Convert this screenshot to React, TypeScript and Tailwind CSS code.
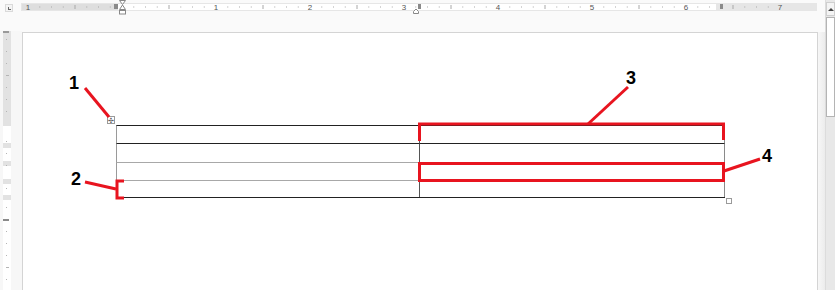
import React from 'react'

const INCH = 94
const ZERO = 101 // ruler-relative x of the left margin

function HRuler() {
  const ticks: React.ReactNode[] = []
  for (let i = -8; i <= 56; i++) {
    const x = ZERO + (i * INCH) / 8
    if (x < 2 || x > 793) continue
    if (i % 8 === 0) continue
    const half = i % 4 === 0
    ticks.push(
      <line key={i} x1={x} x2={x} y1={half ? 5 : 6.5} y2={half ? 9 : 7.5} stroke="#a8a8a8" strokeWidth={1} />
    )
  }
  const nums = [-1, 1, 2, 3, 4, 5, 6, 7]
  return (
    <svg width={800} height={20} className="block">
      <rect x={0.5} y={3.5} width={795} height={7} fill="#ffffff" stroke="#e6e6e6" />
      <rect x={1} y={4} width={96} height={6} fill="#dedede" />
      <rect x={695} y={4} width={100} height={6} fill="#e6e6e6" />
      {ticks}
      {nums.map(n => (
        <text key={n} x={ZERO + n * INCH} y={10} fontSize={8} fill="#555" textAnchor="middle"
          fontFamily="Liberation Sans, Arial, sans-serif">{Math.abs(n)}</text>
      ))}
      {/* left margin block */}
      <rect x={93} y={4} width={4} height={5} fill="#8a8a8a" />
      {/* indent hourglass */}
      <path d="M98.5 0.5 H104.5 L101.5 4.5 Z" fill="#fff" stroke="#888" />
      <path d="M101.5 5 L104.5 9.5 H98.5 Z" fill="#fff" stroke="#888" />
      <rect x={98.5} y={10.5} width={6} height={3.5} fill="#fff" stroke="#888" />
      {/* column marker + hanging indent */}
      <path d="M392.5 11.5 L395 9 L397.5 11.5 V13.5 H392.5 Z" fill="#fff" stroke="#888" />
      <rect x={397} y={4} width={3} height={5} fill="#8a8a8a" />
      <rect x={699} y={4} width={3} height={5} fill="#8a8a8a" />
    </svg>
  )
}

function VRuler() {
  const blocks = [143, 161, 179, 195]
  return (
    <svg width={12} height={260} className="block">
      <rect x={3} y={0} width={8} height={260} fill="#ffffff" />
      <rect x={3} y={0} width={8} height={95} fill="#e2e2e2" />
      <rect x={3} y={0} width={6} height={2} fill="#9a9a9a" />
      {blocks.map(b => (
        <rect key={b} x={3} y={b - 31} width={8} height={5} fill="#e2e2e2" />
      ))}
      {[8, 20, 32, 44, 56, 68, 80, 110, 122, 134, 157, 176, 200, 212, 224, 236, 248].map(y => (
        <line key={y} x1={6} x2={y === 44 || y === 236 ? 9 : 7} y1={y + 0.5} y2={y + 0.5} stroke="#b4b4b4" />
      ))}
      <rect x={3} y={188} width={6} height={2} fill="#8a8a8a" />
    </svg>
  )
}

function Annotations() {
  const red = '#e8141f'
  return (
    <svg width={835} height={290} className="absolute inset-0 pointer-events-none">
      <g stroke={red} strokeWidth={3} fill="none" strokeLinejoin="miter">
        <line x1={85} y1={88} x2={109} y2={117} />
        <line x1={85} y1={182} x2={116} y2={189} />
        <path d="M124 181 H117 V198 H124" />
        <path d="M419.5 141 V124 H723.5 V140" />
        <line x1={588} y1={124} x2={628} y2={87} />
        <rect x={419.5} y={163.5} width={304} height={17} />
        <line x1={724} y1={171} x2={760} y2={159} />
      </g>
      <g fontFamily="Liberation Sans, Arial, sans-serif" fontWeight={700} fontSize={18} fill="#000">
        <text x={69} y={89}>1</text>
        <text x={71} y={185}>2</text>
        <text x={626} y={84}>3</text>
        <text x={762} y={162}>4</text>
      </g>
    </svg>
  )
}

const rows = [
  { h: 'h-[18px]', leftTop: 'border-[#222]', rightTop: 'border-[#222]' },
  { h: 'h-[19px]', leftTop: 'border-[#222]', rightTop: 'border-[#222]' },
  { h: 'h-[18px]', leftTop: 'border-[#a8a8a8]', rightTop: 'border-[#222]' },
  { h: 'h-[17px]', leftTop: 'border-[#a8a8a8]', rightTop: 'border-[#222]' },
]

export default function App() {
  return (
    <div className="relative w-[835px] h-[290px] overflow-hidden bg-[#f4f4f4] flex font-['Liberation_Sans',Arial,sans-serif]">
      <div className="w-[825px] flex flex-col">
        {/* top ruler row */}
        <div className="h-[32px] shrink-0 bg-[#fafafa] flex items-start">
          <div className="ml-[5px] mt-[4px] w-[8px] h-[8px] bg-[#f4f4f4] border border-[#dadada] flex items-end justify-start pl-[2px] pb-[1px]">
            <span className="block w-[3px] h-[3px] border-l border-b border-[#666]" />
          </div>
          <div className="ml-[8px]">
            <HRuler />
          </div>
        </div>

        {/* document area */}
        <div className="flex flex-1 min-h-0">
          <div className="w-[22px] shrink-0 bg-[#f7f7f7] -mt-[1px]">
            <VRuler />
          </div>
          <div className="flex-1 bg-white border-l border-t border-r border-[#d4d4d4]">
            <div className="ml-[93px] mt-[92px] w-[609px] relative">
              {/* move handle */}
              <div className="absolute -left-[9px] -top-[9px] w-[8px] h-[8px] bg-white border border-[#9a9a9a] flex items-center justify-center text-[7px] leading-none text-[#555]">✣</div>
              {rows.map((r, i) => (
                <div key={i} className={`flex ${r.h}`}>
                  <div className={`w-[303px] border-t border-l border-l-[#9a9a9a] ${r.leftTop}`} />
                  <div className={`flex-1 border-t border-l border-r border-l-[#555] border-r-[#8a8a8a] ${r.rightTop}`} />
                </div>
              ))}
              <div className="h-0 border-t border-[#222]" />
              {/* resize handle */}
              <div className="absolute -right-[7px] -bottom-[6px] w-[6px] h-[6px] bg-white border border-[#9a9a9a]" />
            </div>
          </div>
          <div className="w-[7px] shrink-0 bg-gradient-to-r from-[#f7f7f7] to-[#ececec]" />
        </div>
      </div>

      {/* scrollbar */}
      <div className="w-[10px] flex flex-col bg-[#e8e8e8] border-l border-[#dcdcdc]">
        <div className="h-[14px] mt-[2px] flex items-center justify-center bg-[#f4f4f4] border border-[#cfcfcf]">
          <span className="block w-0 h-0 border-l-[3px] border-r-[3px] border-b-[3px] border-l-transparent border-r-transparent border-b-[#444]" />
        </div>
        <div className="h-[100px] mt-[1px] bg-white border border-[#b4b4b4]" />
      </div>

      <Annotations />
    </div>
  )
}
